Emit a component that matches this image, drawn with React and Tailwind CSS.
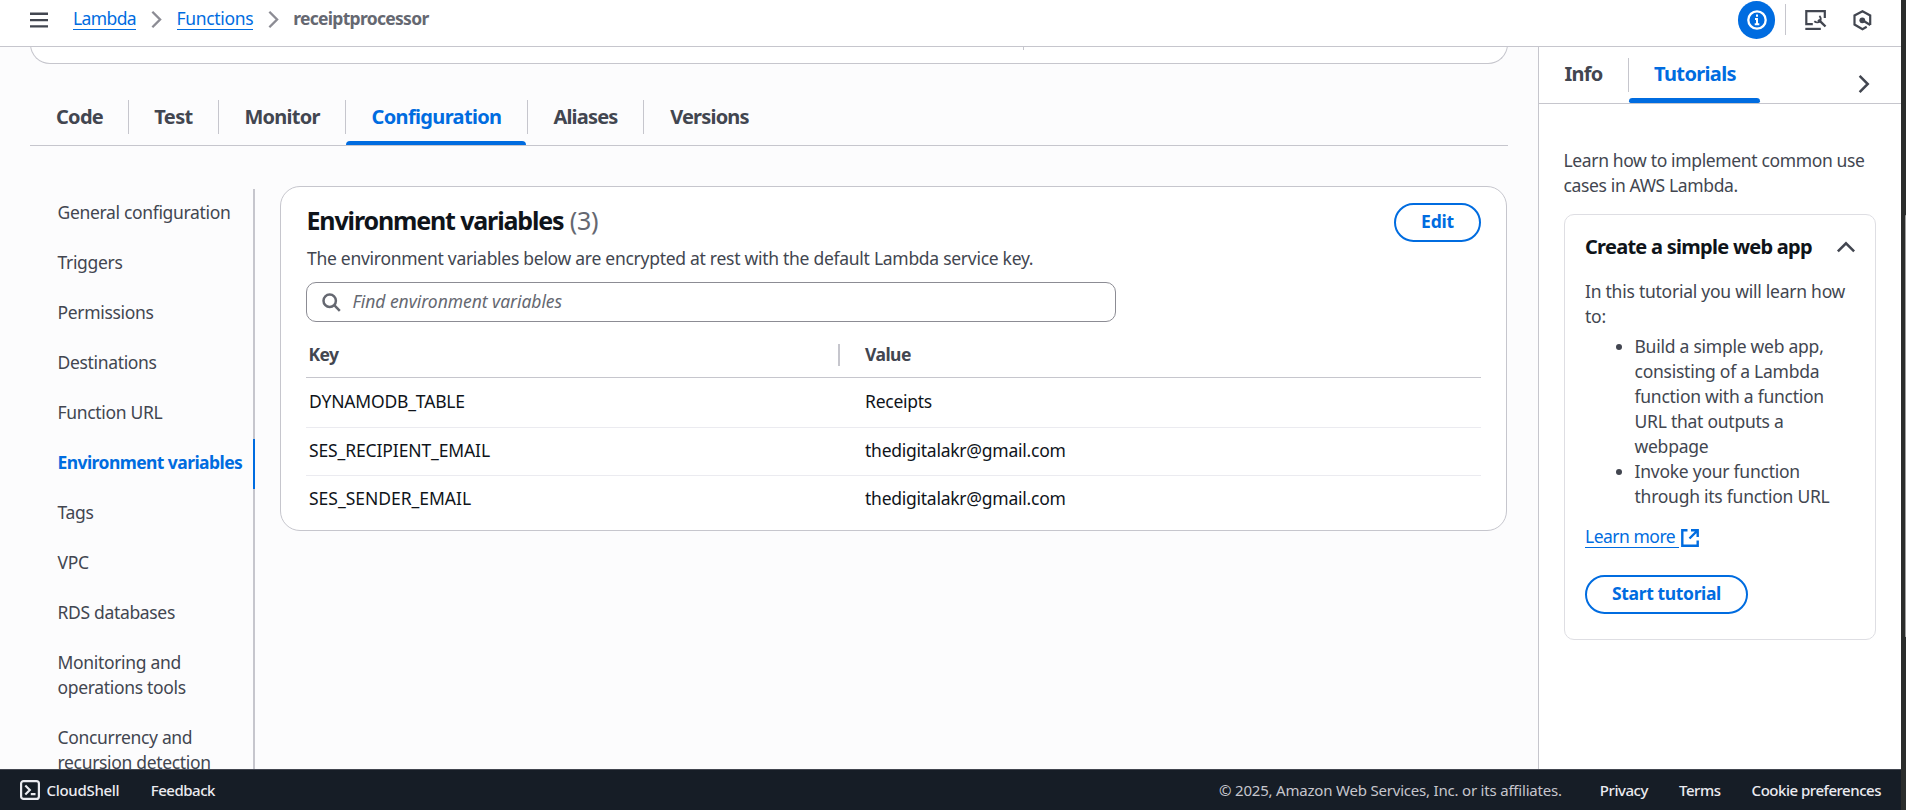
import React from "react";

const TABS = [
  { label: "Code", box: "w-[99px] pl-[1px]", text: "tracking-[-0.7px]" },
  { label: "Test", box: "w-[90px]", text: "tracking-[-0.6px]" },
  { label: "Monitor", box: "w-[127px]", text: "tracking-[-0.75px]" },
  { label: "Configuration", box: "w-[182px]", text: "tracking-[-0.65px]", active: true },
  { label: "Aliases", box: "w-[116px]", text: "tracking-[-0.8px]" },
  { label: "Versions", box: "w-[131px]", text: "tracking-[-0.8px]" },
];

const NAV = [
  "General configuration",
  "Triggers",
  "Permissions",
  "Destinations",
  "Function URL",
  "Environment variables",
  "Tags",
  "VPC",
  "RDS databases",
  "Monitoring and operations tools",
  "Concurrency and recursion detection",
];

const VARS = [
  ["DYNAMODB_TABLE", "Receipts", "h-[50px] border-b", "tracking-[-0.18px]"],
  ["SES_RECIPIENT_EMAIL", "thedigitalakr@gmail.com", "h-[48px] border-b", "tracking-[-0.12px]"],
  ["SES_SENDER_EMAIL", "thedigitalakr@gmail.com", "h-[48px]", "tracking-[-0.02px]"],
];

function Chevron({ className }) {
  return (
    <svg viewBox="0 0 16 16" fill="none" stroke="currentColor" strokeWidth="2" className={className}>
      <path d="M4.5 1.5 11 8l-6.5 6.5" />
    </svg>
  );
}

function Header() {
  return (
    <header className="flex h-[47px] shrink-0 items-start border-b border-[#c6c6cd] bg-white pl-[30px] text-[17.5px] leading-[25px]">
      <svg viewBox="0 0 18 16" className="mt-[12px] h-4 w-[18px] text-[#424650]" fill="currentColor">
        <path d="M0 .5h18V3H0zM0 7h18v2.300H0zM0 13.200h18v2.300H0z" />
      </svg>
      <nav className="flex items-start pt-[6px]">
        <a className="ml-[25px] h-[24px] border-b border-[#006ce0] tracking-[-0.6px] text-[#006ce0]">Lambda</a>
        <Chevron className="mt-[4px] ml-[11px] h-[19px] w-[19px] text-[#8c8c94]" />
        <a className="ml-[10.5px] h-[24px] border-b border-[#006ce0] tracking-[-0.35px] text-[#006ce0]">Functions</a>
        <Chevron className="mt-[4px] ml-[11px] h-[19px] w-[19px] text-[#8c8c94]" />
        <span className="ml-[10px] font-bold tracking-[-0.7px] text-[#656871]">receiptprocessor</span>
      </nav>
      <div className="ml-auto flex items-start pr-[29px]">
        <div className="mt-[1px] flex h-[38px] w-[37px] items-center justify-center rounded-full bg-[#006ce0] text-white">
          <svg viewBox="0 0 20 20" className="h-5 w-5" fill="none" stroke="currentColor" strokeWidth="2.300">
            <circle cx="10" cy="10" r="8.700" />
            <path d="M10 4.500v2.200M8 9h2v5.500M7.700 14.200h4.600" strokeWidth="2" />
          </svg>
        </div>
        <div className="mt-[4px] ml-[10px] h-[31px] w-px bg-[#c6c6cd]" />
        <svg viewBox="0 0 22 21" className="mt-[10px] ml-[19px] h-[21px] w-[22px] text-[#424650]" fill="none" stroke="currentColor" strokeWidth="2.200">
          <path d="M7.800 14.200H1.300V1.200h18.500v6.800" />
          <path d="M.3 18.900h15.500" />
          <path d="m14.800 10.800 5.700 5.700" strokeWidth="2.400" />
          <path d="M9.300 11.200c1.800 1.500 4.300 1.500 5.500.2 1.300-1.300 1.500-3.600-.4-5.400" strokeWidth="1.800" />
          <path d="m13.200 9.800 1.800 1.700" strokeWidth="3" />
        </svg>
        <svg viewBox="0 0 19 21" className="mt-[10px] ml-[26px] h-[21px] w-[19px] text-[#424650]" fill="none" stroke="currentColor" strokeWidth="2.200">
          <path d="M17.200 15V5.500L9.500 1.300l-8 4.200v9l8 4.700 4.200-2.400" />
          <circle cx="9.300" cy="10.300" r="2.900" fill="currentColor" stroke="none" />
          <path d="m9.500 10.300 7.800 4.700" />
        </svg>
      </div>
    </header>
  );
}

function SideNav() {
  return (
    <nav className="mt-[3px] flex w-[225px] shrink-0 flex-col text-[17.5px] leading-[25px]">
      {NAV.map((item) => (
        <a
          key={item}
          className={
            item === "Environment variables"
              ? "border-r-2 border-[#006ce0] pt-[10.5px] pb-[14.5px] pl-[27.5px] font-bold tracking-[-0.57px] whitespace-nowrap text-[#006ce0]"
              : "border-r-2 border-[#c6c6cd] pt-[10.5px] pb-[14.5px] pr-[20px] pl-[27.5px] tracking-[-0.33px] text-[#424650]"
          }
        >
          {item}
        </a>
      ))}
    </nav>
  );
}

function EnvironmentCard() {
  return (
    <section className="ml-[25px] h-[345px] w-[1227px] rounded-[20px] border border-[#c6c6cd] bg-white px-[25px] text-[17.5px] leading-[25px]">
      <div className="flex h-[57px] items-start justify-between pt-[16px]">
        <h2 className="mt-[2px] pl-[0.5px] text-[25px] leading-[30px] font-bold tracking-[-1.15px] text-[#0f141a]">
          Environment variables <span className="ml-px font-normal tracking-[-0.3px] text-[#656871]">(3)</span>
        </h2>
        <button className="h-[39px] w-[87px] rounded-[20px] border-2 border-[#006ce0] pb-[2px] font-bold tracking-[-0.2px] text-[#006ce0]">Edit</button>
      </div>
      <p className="mt-[2px] pl-px tracking-[-0.28px] text-[#424650]">
        The environment variables below are encrypted at rest with the default Lambda service key.
      </p>
      <div className="mt-[11px] flex h-10 w-[810px] items-center rounded-[10px] border border-[#8c8c94] pl-[15px]">
        <svg viewBox="0 0 19 19" className="h-[19px] w-[19px] text-[#656871]" fill="none" stroke="currentColor" strokeWidth="2.500">
          <circle cx="7.700" cy="7.700" r="6.200" />
          <path d="m12.200 12.200 5.600 5.600" />
        </svg>
        <span className="ml-[11.5px] pb-px tracking-[-0.05px] text-[#656871] italic">Find environment variables</span>
      </div>
      <div className="mt-[10px]">
        <div className="flex h-[46px] items-center border-b border-[#c6c6cd] font-bold tracking-[-0.55px] text-[#424650]">
          <div className="w-[532px] pl-[2.5px]">Key</div>
          <div className="h-[22px] w-[2px] bg-[#c6c6cd]" />
          <div className="pl-[25px]">Value</div>
        </div>
        {VARS.map(([key, value, row, track]) => (
          <div key={key} className={`flex items-center border-[#ebebf0] pb-[3px] text-[#0f141a] ${row}`}>
            <div className={`w-[559px] pl-[3px] ${track}`}>{key}</div>
            <div className="tracking-[-0.25px]">{value}</div>
          </div>
        ))}
      </div>
    </section>
  );
}

function MainContent() {
  return (
    <main className="flex w-[1538px] shrink-0 flex-col overflow-hidden bg-[#fcfcfd] pr-[30px] pl-[30px]">
      <div className="-mt-[20px] flex h-[37px] w-[1478px] shrink-0 items-start rounded-b-[20px] border border-t-0 border-[#c6c6cd] bg-white">
        <div className="ml-[992px] h-[23px] w-px bg-[#c6c6cd]" />
      </div>
      <div className="mt-[36px] flex h-[46px] w-[1478px] shrink-0 border-b border-[#c6c6cd] text-xl leading-[25px] font-bold">
        {TABS.map((t, i) => (
          <div key={t.label} className={`relative flex h-[45px] shrink-0 items-start ${t.box}`}>
            <span className={`flex-1 pt-[4px] text-center ${t.text} ${t.active ? "text-[#006ce0]" : "text-[#424650]"}`}>{t.label}</span>
            {i < TABS.length - 1 && <span className="h-[34px] w-px bg-[#c6c6cd]" />}
            {t.active && <span className="absolute bottom-0 left-0 h-1 w-[180px] rounded-t-[4px] bg-[#006ce0]" />}
          </div>
        ))}
      </div>
      <div className="mt-[40px] flex w-[1478px] items-start">
        <SideNav />
        <EnvironmentCard />
      </div>
    </main>
  );
}

function TutorialPanel() {
  return (
    <aside className="flex w-[363px] shrink-0 flex-col border-l border-[#c6c6cd] bg-white text-[17.5px] leading-[25px] text-[#424650]">
      <div className="flex h-[57px] shrink-0 border-b border-[#c6c6cd] pt-[11px] font-bold">
        <div className="w-[89px] pt-[2.5px] pl-[25.5px] text-[20px] tracking-[-0.75px]">Info</div>
        <div className="h-[34px] w-px bg-[#c6c6cd]" />
        <div className="relative h-[45px] w-[131px] pt-[2.5px] pl-px text-center text-[20px] tracking-[-0.65px] text-[#006ce0]">
          Tutorials
          <span className="absolute bottom-0 left-0 h-[5px] w-[131px] rounded-t-[4px] rounded-b-[2px] bg-[#006ce0]" />
        </div>
        <Chevron className="mt-[15.500px] ml-auto mr-[27px] h-5 w-5" />
      </div>
      <p className="mt-[44px] pr-[20px] pl-[24.5px] tracking-[-0.36px]">
        Learn how to implement common use
        <br />
        cases in AWS Lambda.
      </p>
      <div className="mt-[16px] ml-[25px] h-[426px] w-[312px] rounded-[10px] border border-[#dedee3] px-[20px]">
        <div className="mt-[19px] flex items-center justify-between">
          <h3 className="text-xl leading-[25px] font-bold tracking-[-0.73px] whitespace-nowrap text-[#0f141a]">Create a simple web app</h3>
          <Chevron className="-mr-px h-[20px] w-[20px] -rotate-90" />
        </div>
        <p className="mt-[20px] tracking-[-0.25px]">
          In this tutorial you will learn how
          <br />
          to:
        </p>
        <ul className="mt-[5px] list-disc pl-[49.5px] tracking-[-0.25px]">
          <li>
            Build a simple web app,
            <br />
            consisting of a Lambda
            <br />
            function with a function
            <br />
            URL that outputs a
            <br />
            webpage
          </li>
          <li>
            Invoke your function
            <br />
            through its function URL
          </li>
        </ul>
        <a className="mt-[15px] flex items-start text-[#006ce0]">
          <span className="h-[24px] w-[94px] border-b border-[#006ce0] tracking-[-0.5px]">Learn more</span>
          <svg viewBox="0 0 18 18" className="mt-[5px] ml-[2px] h-[18px] w-[18px]" fill="none" stroke="currentColor" strokeWidth="2.400">
            <path d="M6.500 1.300H1.300v15.400h15.400v-5.200" />
            <path d="M10 1.300h6.700V8M16.500 1.500 8.500 9.500" />
          </svg>
        </a>
        <button className="mt-[27px] h-[39px] w-[163px] rounded-[20px] border-2 border-[#006ce0] pb-[2px] font-bold tracking-[-0.36px] text-[#006ce0]">
          Start tutorial
        </button>
      </div>
    </aside>
  );
}

function Footer() {
  return (
    <footer className="flex h-[41px] shrink-0 items-center border-t border-[#424650] bg-[#161d26] pr-[20px] pl-[20px] text-[15px] leading-5 text-[#ebebf0]">
      <svg viewBox="0 0 20 20" className="h-5 w-5" fill="none" stroke="currentColor" strokeWidth="2.200">
        <rect x="1.100" y="1.100" width="17.800" height="17.800" rx="2.500" />
        <path d="m5.300 5.500 4.500 4.500-4.500 4.500M10.800 14.200h4.700" />
      </svg>
      <span className="ml-[6.5px] font-medium tracking-[-0.3px]">CloudShell</span>
      <span className="ml-[31.5px] font-medium tracking-[-0.5px]">Feedback</span>
      <span className="ml-auto tracking-[-0.2px] text-[#c6c6cd]">© 2025, Amazon Web Services, Inc. or its affiliates.</span>
      <span className="ml-[38px] font-medium tracking-[-0.45px]">Privacy</span>
      <span className="ml-[31px] font-medium tracking-[-0.45px]">Terms</span>
      <span className="ml-[31px] font-medium tracking-[-0.48px]">Cookie preferences</span>
    </footer>
  );
}

export default function App() {
  return (
    <div className="flex h-[810px] w-[1906px] overflow-hidden bg-[#2b2d2c] font-['Noto_Sans','Open_Sans',sans-serif]">
      <div className="flex w-[1901px] shrink-0 flex-col">
        <Header />
        <div className="flex min-h-0 flex-1">
          <MainContent />
          <TutorialPanel />
        </div>
        <Footer />
      </div>
      <div className="mt-[215px] ml-auto h-[422px] w-px rounded-full bg-[#9f9f9f]" />
    </div>
  );
}
